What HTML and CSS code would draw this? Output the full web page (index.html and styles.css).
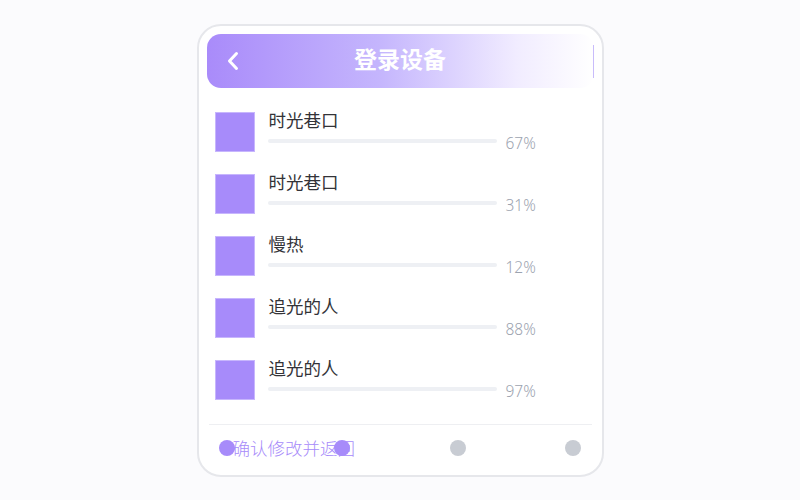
FILE: index.html
```html
<!DOCTYPE html>
<html lang="zh">
<head>
<meta charset="utf-8">
<title>登录设备</title>
<link rel="stylesheet" href="styles.css">
</head>
<body>
<div class="card">
  <div class="header">
    <svg class="back" width="14" height="20" viewBox="0 0 14 20"><path d="M10.5 2.5 L3.5 10 L10.5 17.5" fill="none" stroke="#fff" stroke-width="3" stroke-linecap="round" stroke-linejoin="round"/></svg>
    <div class="title">登录设备</div>
    <span class="edge"></span>
  </div>
  <div class="list">
    <div class="row">
      <div class="thumb"></div>
      <div class="info">
        <div class="name">时光巷口</div>
        <div class="prog"><div class="bar"></div><span class="pct">67%</span></div>
      </div>
    </div>
    <div class="row">
      <div class="thumb"></div>
      <div class="info">
        <div class="name">时光巷口</div>
        <div class="prog"><div class="bar"></div><span class="pct">31%</span></div>
      </div>
    </div>
    <div class="row">
      <div class="thumb"></div>
      <div class="info">
        <div class="name">慢热</div>
        <div class="prog"><div class="bar"></div><span class="pct">12%</span></div>
      </div>
    </div>
    <div class="row">
      <div class="thumb"></div>
      <div class="info">
        <div class="name">追光的人</div>
        <div class="prog"><div class="bar"></div><span class="pct">88%</span></div>
      </div>
    </div>
    <div class="row">
      <div class="thumb"></div>
      <div class="info">
        <div class="name">追光的人</div>
        <div class="prog"><div class="bar"></div><span class="pct">97%</span></div>
      </div>
    </div>
  </div>
  <div class="footer">
    <div class="dots">
      <span class="dot on"></span>
      <span class="dot on"></span>
      <span class="dot"></span>
      <span class="dot"></span>
    </div>
    <div class="confirm">确认修改并返回</div>
  </div>
</div>
</body>
</html>
```
FILE: styles.css
```css
html, body {
  margin: 0;
  padding: 0;
  background: #fbfbfd;
}
body {
  padding-top: 24px;
  font-family: "Noto Sans", "Noto Sans CJK SC", sans-serif;
}
.card {
  box-sizing: border-box;
  width: 407px;
  height: 453px;
  margin: 0 auto;
  border: 2px solid #e6e7eb;
  border-radius: 24px;
  background: #ffffff;
  padding: 8px 8px 0 8px;
}
.header {
  height: 54px;
  border-radius: 14px;
  background: linear-gradient(90deg, #a98bfa 0%, #c5b6fd 45%, #f1ecff 80%, #ffffff 100%);
  display: flex;
  align-items: center;
  padding-left: 19px;
  position: relative;
}
.back {
  display: block;
}
.title {
  position: absolute;
  left: 0;
  right: 0;
  top: -3px;
  text-align: center;
  color: #ffffff;
  font-family: "Noto Sans CJK SC", sans-serif;
  font-weight: 700;
  font-size: 23px;
  line-height: 54px;
  pointer-events: none;
}
.edge {
  position: absolute;
  right: 0;
  top: 11px;
  width: 1px;
  height: 33px;
  background: #c9bcfb;
}
.list {
  display: flex;
  flex-direction: column;
  gap: 22px;
  padding: 24px 0 0 8px;
}
.row {
  display: flex;
  gap: 13px;
  height: 40px;
}
.thumb {
  width: 40px;
  height: 40px;
  box-sizing: border-box;
  background: #a78bfa;
  border: 1px solid #c7b6fd;
}
.info {
  display: flex;
  flex-direction: column;
}
.name {
  font-family: "Noto Sans CJK SC", sans-serif;
  font-size: 17.5px;
  line-height: 20px;
  margin-top: -2px;
  padding-left: 1px;
  color: #333338;
}
.prog {
  display: flex;
  align-items: flex-start;
  margin-top: 6px;
}
.bar {
  width: 229px;
  height: 4px;
  margin-top: 3px;
  border-radius: 2px;
  background: #eef0f4;
}
.pct {
  margin-left: 9px;
  margin-top: -2px;
  font-size: 15.5px;
  font-weight: 300;
  line-height: 18px;
  color: #9ca3af;
}
.footer {
  margin: 24px 2px 0 2px;
  border-top: 1px solid #eeeff2;
  display: grid;
  padding: 14px 10px 0 10px;
}
.dots, .confirm {
  grid-area: 1 / 1;
}
.dots {
  display: flex;
  justify-content: space-between;
  align-items: center;
  height: 18px;
}
.dot {
  width: 16px;
  height: 16px;
  border-radius: 50%;
  background: #c8ccd3;
}
.dot.on {
  background: #a78bfa;
}
.confirm {
  padding-left: 14px;
  font-family: "Noto Sans CJK SC", sans-serif;
  font-weight: 300;
  font-size: 17.5px;
  line-height: 18px;
  color: #a78bfa;
}
```
